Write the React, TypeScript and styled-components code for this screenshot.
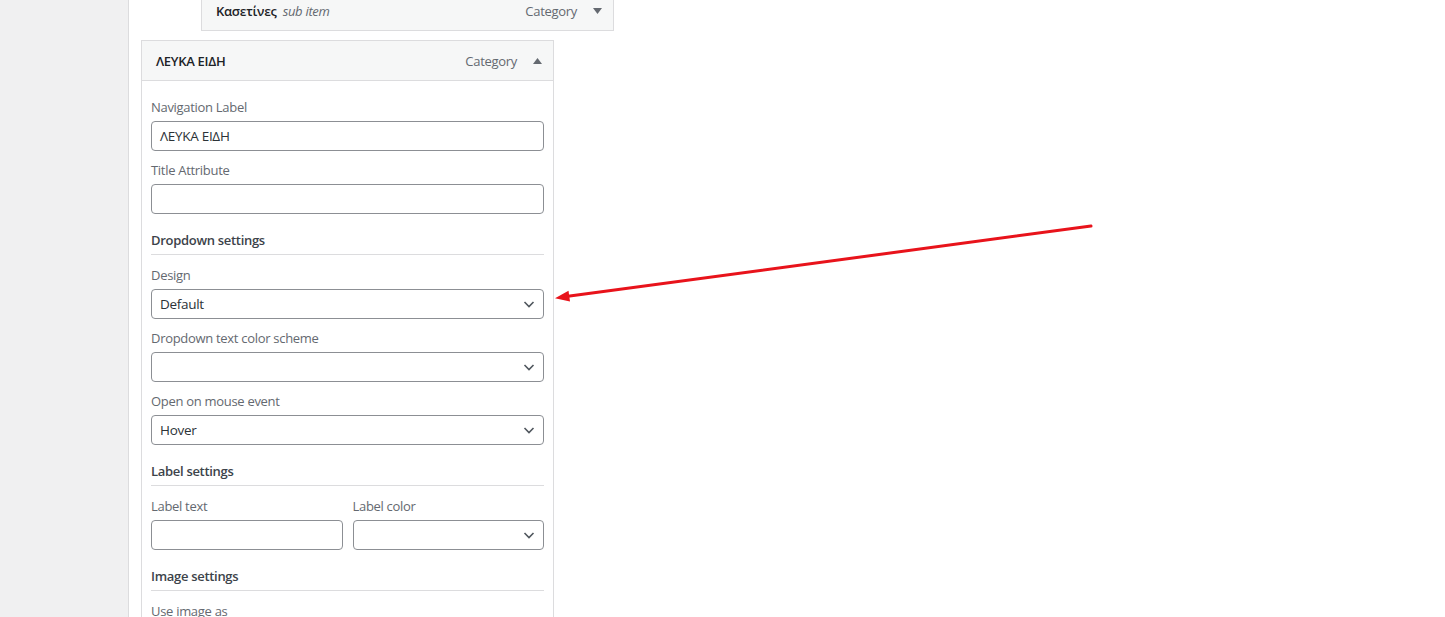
import React from 'react';
import styled, { createGlobalStyle } from 'styled-components';

const GlobalStyle = createGlobalStyle`
    html, body {
        margin: 0;
        padding: 0;
        background: #fff;
        overflow: hidden;
    }
    body {
        font-family: "Segoe UI", "Open Sans", "Noto Sans", sans-serif;
        font-size: 13px;
        letter-spacing: -0.3px;
        color: #3c434a;
    }
`;

const Page = styled.div`
    position: relative;
    display: flex;
    width: 1445px;
    height: 617px;
    overflow: hidden;
`;

const Sidebar = styled.div`
    width: 128px;
    flex-shrink: 0;
    background: #f0f0f1;
    border-right: 1px solid #dcdcde;
`;

const Content = styled.div`
    display: flex;
    flex-direction: column;
    gap: 9px;
    margin-top: -10px;
    padding-left: 12px;
`;

const MenuItem = styled.div`
    width: 413px;
    box-sizing: border-box;
    margin-left: ${(props: { depth: number }) => props.depth * 60}px;
`;

const ItemBar = styled.div`
    display: flex;
    align-items: center;
    height: 41px;
    box-sizing: border-box;
    padding: 0 11px 0 14px;
    background: #f6f7f7;
    border: 1px solid #dcdcde;
`;

const ItemTitle = styled.span`
    font-weight: 600;
    color: #1d2327;
`;

const SubLabel = styled.span`
    font-style: italic;
    color: #646970;
    margin-left: 6px;
`;

const ItemType = styled.span`
    margin-left: auto;
    color: #646970;
`;

const Toggle = styled.span`
    display: flex;
    margin-left: 16px;
    svg {
        display: block;
    }
`;

const Settings = styled.div`
    display: flex;
    flex-direction: column;
    height: 560px;
    box-sizing: border-box;
    padding: 17px 9px 0;
    border: 1px solid #dcdcde;
    border-top: none;
    background: #fff;
`;

const Field = styled.div`
    margin-bottom: 10px;
`;

const Label = styled.div`
    line-height: 18px;
    margin-bottom: 5px;
    color: #646970;
`;

const Input = styled.div`
    display: flex;
    align-items: center;
    height: 30px;
    box-sizing: border-box;
    padding: 0 8px;
    border: 1px solid #8c8f94;
    border-radius: 4px;
    font-size: 13.5px;
    color: #2c3338;
    background: #fff;
`;

const Chevron = styled.svg`
    margin-left: auto;
    margin-right: -2px;
`;

const SectionTitle = styled.div`
    margin-top: 7px;
    line-height: 18px;
    padding-bottom: 5px;
    margin-bottom: 11px;
    border-bottom: 1px solid #dcdcde;
    font-weight: 600;
    color: #3c434a;
`;

const Row = styled.div`
    display: grid;
    grid-template-columns: 1fr 1fr;
    gap: 10px;
`;

const Annotation = styled.svg`
    position: absolute;
    left: 0;
    top: 0;
    pointer-events: none;
`;

const Triangle = ({ up }: { up?: boolean }) => (
    <svg width="9" height="6" viewBox="0 0 9 6">
        <path d={up ? 'M0 6 L4.5 0 L9 6 Z' : 'M0 0 L4.5 6 L9 0 Z'} fill="#646970" />
    </svg>
);

const Select = ({ value }: { value?: string }) => (
    <Input>
        {value}
        <Chevron width="16" height="16" viewBox="0 0 16 16">
            <path d="M3.5 6 L8 10.5 L12.5 6" fill="none" stroke="#50575e" strokeWidth="1.6" />
        </Chevron>
    </Input>
);

export default function App() {
    return (
        <>
            <GlobalStyle />
            <Page>
                <Sidebar />
                <Content>
                    <MenuItem depth={1}>
                        <ItemBar>
                            <ItemTitle>Κασετίνες</ItemTitle>
                            <SubLabel>sub item</SubLabel>
                            <ItemType>Category</ItemType>
                            <Toggle><Triangle /></Toggle>
                        </ItemBar>
                    </MenuItem>
                    <MenuItem depth={0}>
                        <ItemBar>
                            <ItemTitle>ΛΕΥΚΑ ΕΙΔΗ</ItemTitle>
                            <ItemType>Category</ItemType>
                            <Toggle><Triangle up /></Toggle>
                        </ItemBar>
                        <Settings>
                            <Field>
                                <Label>Navigation Label</Label>
                                <Input>ΛΕΥΚΑ ΕΙΔΗ</Input>
                            </Field>
                            <Field>
                                <Label>Title Attribute</Label>
                                <Input />
                            </Field>
                            <SectionTitle>Dropdown settings</SectionTitle>
                            <Field>
                                <Label>Design</Label>
                                <Select value="Default" />
                            </Field>
                            <Field>
                                <Label>Dropdown text color scheme</Label>
                                <Select />
                            </Field>
                            <Field>
                                <Label>Open on mouse event</Label>
                                <Select value="Hover" />
                            </Field>
                            <SectionTitle>Label settings</SectionTitle>
                            <Row>
                                <Field>
                                    <Label>Label text</Label>
                                    <Input />
                                </Field>
                                <Field>
                                    <Label>Label color</Label>
                                    <Select />
                                </Field>
                            </Row>
                            <SectionTitle>Image settings</SectionTitle>
                            <Field>
                                <Label>Use image as</Label>
                            </Field>
                        </Settings>
                    </MenuItem>
                </Content>
                <Annotation width="1445" height="617">
                    <line x1="1091" y1="226" x2="566" y2="296.6" stroke="#e8131b" strokeWidth="3" strokeLinecap="round" />
                    <path d="M555 298.2 L568.5 290.8 L570 301.6 Z" fill="#e8131b" />
                </Annotation>
            </Page>
        </>
    );
}
